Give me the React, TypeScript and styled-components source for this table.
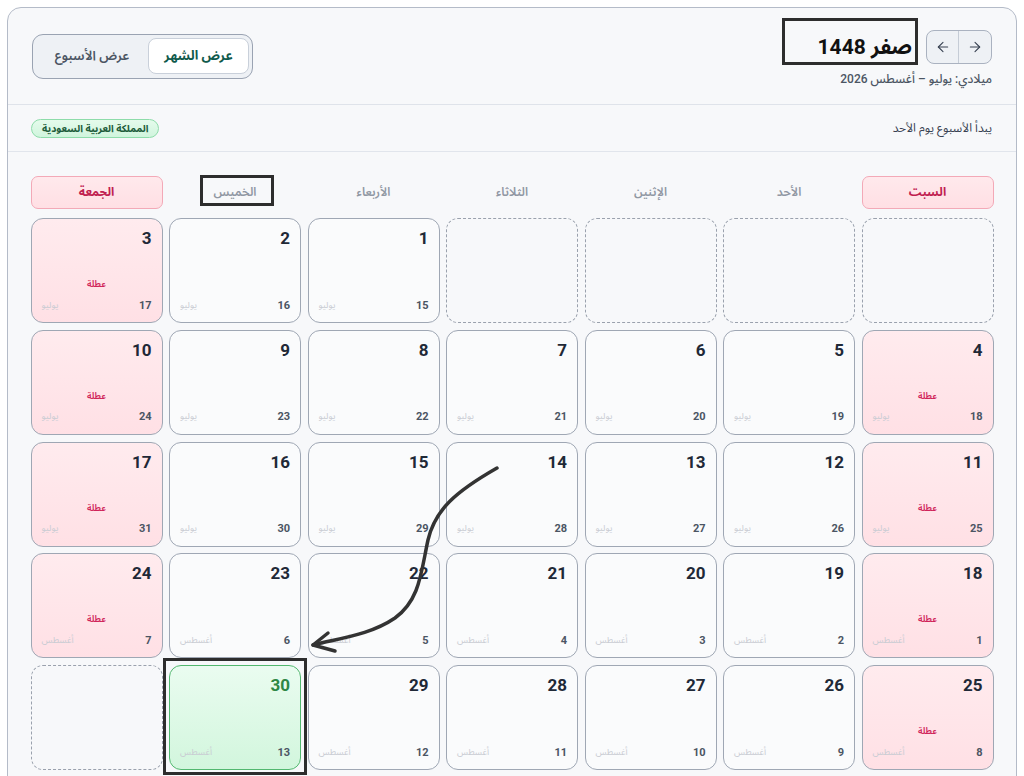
import React from 'react';
import styled, { createGlobalStyle, css } from 'styled-components';
import { ArrowLeft, ArrowRight } from 'lucide-react';

const Global = createGlobalStyle`
  html, body { margin: 0; padding: 0; background: #ffffff; }
  body {
    font-family: Roboto, "Noto Sans Arabic", "DejaVu Sans", sans-serif;
    overflow: hidden;
  }
  * { box-sizing: border-box; }
`;

const Page = styled.div`
  position: relative;
  width: 1024px;
  height: 776px;
  padding: 7px;
  overflow: hidden;
`;

const Card = styled.div`
  direction: rtl;
  width: 1010px;
  background: #f7f8fa;
  border: 1.5px solid #b4bbc8;
  border-radius: 14px;
`;

const Header = styled.header`
  display: flex;
  align-items: center;
  justify-content: space-between;
  height: 97px;
  padding: 0 24px;
  border-bottom: 1.5px solid #dfe3ea;
`;

const TitleBlock = styled.div`
  display: flex;
  flex-direction: column;
  align-items: flex-start;
  gap: 8px;
  margin-top: 4px;
`;

const TitleRow = styled.div`
  display: flex;
  align-items: center;
  gap: 14px;
`;

const NavGroup = styled.div`
  display: flex;
  height: 34px;
  border: 1px solid #aab2c0;
  border-radius: 8px;
  overflow: hidden;
  background: #eef1f5;
`;

const NavBtn = styled.button`
  width: 32px;
  height: 32px;
  display: flex;
  align-items: center;
  justify-content: center;
  border: none;
  background: transparent;
  color: #374151;
  padding: 0;
  & + & { border-right: 1px solid #c5ccd6; }
`;

const Title = styled.h1`
  margin: 0;
  font-size: 21px;
  font-weight: 700;
  color: #111111;
  line-height: 28px;
`;

const Subtitle = styled.div`
  font-size: 12px;
  font-weight: 500;
  color: #4b5563;
  line-height: 14px;
`;

const Toggle = styled.div`
  display: flex;
  height: 45px;
  padding: 3px;
  border: 1.5px solid #9aa3b2;
  border-radius: 11px;
  background: #eef1f5;
`;

const ToggleBtn = styled.button<{ $active?: boolean }>`
  height: 36px;
  border-radius: 8px;
  font-family: inherit;
  font-size: 13px;
  padding: 0;
  ${(p) =>
    p.$active
      ? css`
          width: 101px;
          background: #ffffff;
          border: 1px solid #c9d0da;
          color: #0f5a4c;
          font-weight: 700;
        `
      : css`
          width: 112px;
          background: transparent;
          border: 1px solid transparent;
          color: #4b5563;
          font-weight: 600;
        `}
`;

const InfoBar = styled.div`
  display: flex;
  align-items: center;
  justify-content: space-between;
  height: 47px;
  padding: 0 24px 0 23px;
  border-bottom: 1.5px solid #e1e5ec;
`;

const InfoText = styled.div`
  font-size: 12px;
  color: #374151;
`;

const Badge = styled.div`
  height: 19px;
  padding: 0 10px;
  display: flex;
  align-items: center;
  font-size: 10px;
  font-weight: 700;
  color: #1d5c3a;
  background: linear-gradient(180deg, #e5fbec, #d0f5dd);
  border: 1.2px solid #8edcaa;
  border-radius: 999px;
`;

const Body = styled.div`
  padding: 24px 22.5px 24px;
`;

const HeadRow = styled.div`
  display: grid;
  grid-template-columns: repeat(7, 1fr);
  column-gap: 6.5px;
  height: 33px;
  margin-bottom: 9px;
`;

const DayHead = styled.div<{ $weekend?: boolean }>`
  display: flex;
  align-items: center;
  justify-content: center;
  font-size: 12px;
  font-weight: 600;
  color: #9097a3;
  border-radius: 7px;
  ${(p) =>
    p.$weekend &&
    css`
      background: linear-gradient(180deg, #ffe9ec, #ffdfe4);
      border: 1.5px solid #f3a9b7;
      color: #c02050;
      font-weight: 700;
    `}
`;

const Grid = styled.div`
  display: grid;
  grid-template-columns: repeat(7, 1fr);
  grid-auto-rows: 105px;
  column-gap: 6.5px;
  row-gap: 6.75px;
`;

type Kind = 'empty' | 'normal' | 'holiday' | 'today';

const Cell = styled.div<{ $kind: Kind }>`
  display: flex;
  flex-direction: column;
  border-radius: 12px;
  padding: 9px 10px 10px;
  border: 1.6px solid #9fa7b4;
  background: #fafbfc;
  ${(p) =>
    p.$kind === 'empty' &&
    css`
      border: 1.6px dashed #9aa1ad;
      background: transparent;
    `}
  ${(p) =>
    p.$kind === 'holiday' &&
    css`
      background: linear-gradient(180deg, #ffebee, #ffe0e5);
    `}
  ${(p) =>
    p.$kind === 'today' &&
    css`
      border-color: #52b86f;
      background: linear-gradient(180deg, #eafcf0, #d2f6dd);
    `}
`;

const DayNum = styled.div<{ $today?: boolean }>`
  font-size: 17px;
  font-weight: 700;
  line-height: 20px;
  color: ${(p) => (p.$today ? '#2e8744' : '#1f2937')};
`;

const Middle = styled.div`
  flex: 1;
  display: flex;
  align-items: flex-end;
  justify-content: center;
  padding-bottom: 8px;
`;

const HolidayTag = styled.span`
  font-size: 9px;
  font-weight: 600;
  line-height: 12px;
  color: #d0245a;
`;

const BottomRow = styled.div`
  display: flex;
  align-items: center;
  justify-content: space-between;
  height: 14px;
`;

const Greg = styled.span`
  font-size: 11px;
  font-weight: 700;
  color: #4b5563;
`;

const MonthLbl = styled.span`
  font-size: 9px;
  color: #c9ccd3;
`;

const AnnoBox = styled.div<{ $x: number; $y: number; $w: number; $h: number }>`
  position: absolute;
  left: ${(p) => p.$x}px;
  top: ${(p) => p.$y}px;
  width: ${(p) => p.$w}px;
  height: ${(p) => p.$h}px;
  border: 3px solid #2d2d2d;
  pointer-events: none;
`;

const ArrowLayer = styled.svg`
  position: absolute;
  left: 0;
  top: 0;
  pointer-events: none;
`;

const dayNames = ['السبت', 'الأحد', 'الإثنين', 'الثلاثاء', 'الأربعاء', 'الخميس', 'الجمعة'];

type Day = { h: number; g: number; m: string } | null;

const JUL = 'يوليو';
const AUG = 'أغسطس';

const days: Day[] = [
  null, null, null, null,
  { h: 1, g: 15, m: JUL }, { h: 2, g: 16, m: JUL }, { h: 3, g: 17, m: JUL },
];
for (let h = 4; h <= 30; h++) {
  const g = h + 14;
  days.push(g <= 31 ? { h, g, m: JUL } : { h, g: g - 31, m: AUG });
}
days.push(null);

export default function App() {
  return (
    <Page>
      <Global />
      <Card>
        <Header>
          <TitleBlock>
            <TitleRow>
              <NavGroup>
                <NavBtn aria-label="next"><ArrowRight size={16} strokeWidth={1.6} /></NavBtn>
                <NavBtn aria-label="prev"><ArrowLeft size={16} strokeWidth={1.6} /></NavBtn>
              </NavGroup>
              <Title>صفر 1448</Title>
            </TitleRow>
            <Subtitle>ميلادي: يوليو – أغسطس 2026</Subtitle>
          </TitleBlock>
          <Toggle>
            <ToggleBtn $active>عرض الشهر</ToggleBtn>
            <ToggleBtn>عرض الأسبوع</ToggleBtn>
          </Toggle>
        </Header>
        <InfoBar>
          <InfoText>يبدأ الأسبوع يوم الأحد</InfoText>
          <Badge>المملكة العربية السعودية</Badge>
        </InfoBar>
        <Body>
          <HeadRow>
            {dayNames.map((d, i) => (
              <DayHead key={d} $weekend={i === 0 || i === 6}>{d}</DayHead>
            ))}
          </HeadRow>
          <Grid>
            {days.map((d, i) => {
              if (!d) return <Cell key={i} $kind="empty" />;
              const col = i % 7;
              const holiday = col === 0 || col === 6;
              const today = d.h === 30;
              const kind: Kind = today ? 'today' : holiday ? 'holiday' : 'normal';
              return (
                <Cell key={i} $kind={kind}>
                  <DayNum $today={today}>{d.h}</DayNum>
                  <Middle>{holiday && <HolidayTag>عطلة</HolidayTag>}</Middle>
                  <BottomRow>
                    <Greg>{d.g}</Greg>
                    <MonthLbl>{d.m}</MonthLbl>
                  </BottomRow>
                </Cell>
              );
            })}
          </Grid>
        </Body>
      </Card>
      <AnnoBox $x={782} $y={18} $w={136} $h={47} />
      <AnnoBox $x={200} $y={175} $w={74} $h={31} />
      <AnnoBox $x={163} $y={658} $w={144} $h={117} />
      <ArrowLayer width={1024} height={776} viewBox="0 0 1024 776">
        <path
          d="M497 468 C 455 492 435 510 428 540 C 421 572 420 600 395 618 C 370 635 340 638 313 645"
          fill="none"
          stroke="#333333"
          strokeWidth={3.5}
          strokeLinecap="round"
        />
        <path
          d="M328 633 L313 645 L335 651"
          fill="none"
          stroke="#333333"
          strokeWidth={3.5}
          strokeLinecap="round"
          strokeLinejoin="round"
        />
      </ArrowLayer>
    </Page>
  );
}
